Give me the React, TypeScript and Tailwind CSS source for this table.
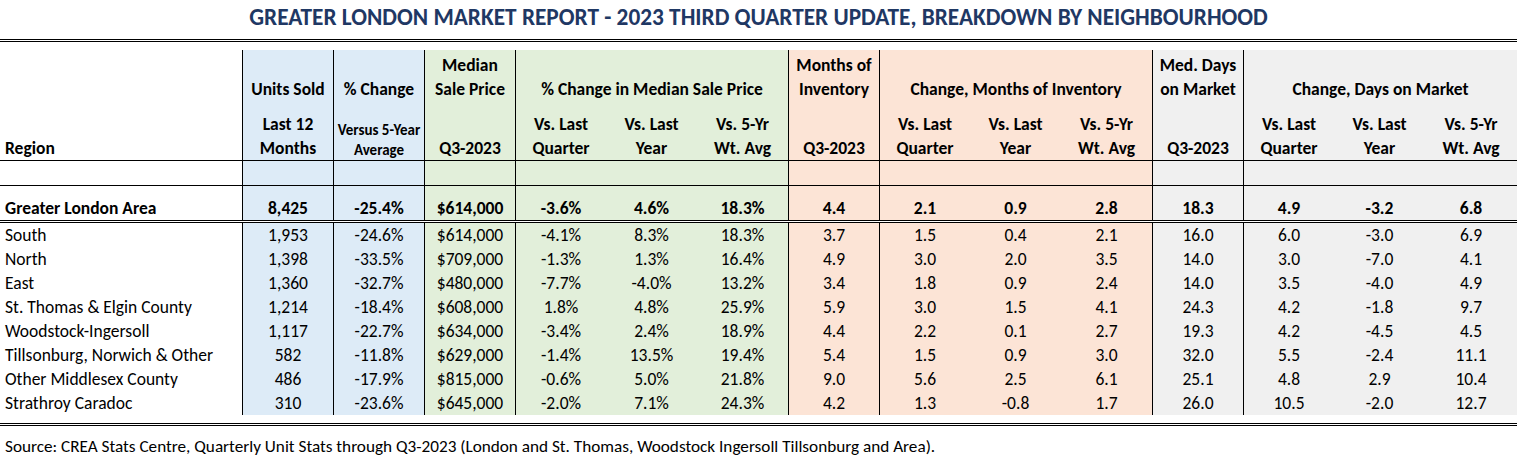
import React from "react";

const BG = [
  "bg-[#ddebf7]",
  "bg-[#ddebf7]",
  "bg-[#e2efda]",
  "bg-[#e2efda]",
  "bg-[#e2efda]",
  "bg-[#e2efda]",
  "bg-[#fce4d6]",
  "bg-[#fce4d6]",
  "bg-[#fce4d6]",
  "bg-[#fce4d6]",
  "bg-[#f0f0f0]",
  "bg-[#f0f0f0]",
  "bg-[#f0f0f0]",
  "bg-[#f0f0f0]",
];
const BL = [true, true, true, true, false, false, true, true, false, false, true, true, false, false];

const rows: [string, ...string[]][] = [
  ["South", "1,953", "-24.6%", "$614,000", "-4.1%", "8.3%", "18.3%", "3.7", "1.5", "0.4", "2.1", "16.0", "6.0", "-3.0", "6.9"],
  ["North", "1,398", "-33.5%", "$709,000", "-1.3%", "1.3%", "16.4%", "4.9", "3.0", "2.0", "3.5", "14.0", "3.0", "-7.0", "4.1"],
  ["East", "1,360", "-32.7%", "$480,000", "-7.7%", "-4.0%", "13.2%", "3.4", "1.8", "0.9", "2.4", "14.0", "3.5", "-4.0", "4.9"],
  ["St. Thomas & Elgin County", "1,214", "-18.4%", "$608,000", "1.8%", "4.8%", "25.9%", "5.9", "3.0", "1.5", "4.1", "24.3", "4.2", "-1.8", "9.7"],
  ["Woodstock-Ingersoll", "1,117", "-22.7%", "$634,000", "-3.4%", "2.4%", "18.9%", "4.4", "2.2", "0.1", "2.7", "19.3", "4.2", "-4.5", "4.5"],
  ["Tillsonburg, Norwich & Other", "582", "-11.8%", "$629,000", "-1.4%", "13.5%", "19.4%", "5.4", "1.5", "0.9", "3.0", "32.0", "5.5", "-2.4", "11.1"],
  ["Other Middlesex County", "486", "-17.9%", "$815,000", "-0.6%", "5.0%", "21.8%", "9.0", "5.6", "2.5", "6.1", "25.1", "4.8", "2.9", "10.4"],
  ["Strathroy Caradoc", "310", "-23.6%", "$645,000", "-2.0%", "7.1%", "24.3%", "4.2", "1.3", "-0.8", "1.7", "26.0", "10.5", "-2.0", "12.7"],
];

const total = ["Greater London Area", "8,425", "-25.4%", "$614,000", "-3.6%", "4.6%", "18.3%", "4.4", "2.1", "0.9", "2.8", "18.3", "4.9", "-3.2", "6.8"];

const GRID = "grid grid-cols-[242px_repeat(13,91px)_1fr]";

function cellCls(i: number) {
  return `${BG[i]} ${BL[i] ? "border-l border-black" : ""}`;
}

function H({ i, span, children, className = "" }: { i: number; span?: boolean; children: React.ReactNode; className?: string }) {
  return (
    <div className={`${cellCls(i)} ${span ? "col-span-3" : ""} flex items-end justify-center text-center whitespace-nowrap ${className}`}>
      <div>{children}</div>
    </div>
  );
}

function SubGroup({ start }: { start: number }) {
  return (
    <>
      <H i={start}>
        Vs. Last
        <br />
        Quarter
      </H>
      <H i={start + 1}>
        Vs. Last
        <br />
        Year
      </H>
      <H i={start + 2}>
        Vs. 5-Yr
        <br />
        Wt. Avg
      </H>
    </>
  );
}

export default function App() {
  return (
    <div className="w-[1517px] h-[459px] overflow-hidden bg-white text-black font-['Calibri','Carlito','Lato',sans-serif] text-[17.5px] leading-[24px]">
      <h1 className="h-[39px] flex items-center justify-center pb-[5px] text-[23.3px] font-bold text-[#1f3864]">
        GREATER LONDON MARKET REPORT - 2023 THIRD QUARTER UPDATE, BREAKDOWN BY NEIGHBOURHOOD
      </h1>
      <div className="border-t-[3px] border-double border-black" />

      {/* header */}
      <div className={`${GRID} grid-rows-[51px_59px] mt-[8px] border-b border-black font-bold`}>
        <div className="row-span-2 flex items-end pl-[5px]">Region</div>
        <H i={0}>Units Sold</H>
        <H i={1}>% Change</H>
        <H i={2}>
          Median
          <br />
          Sale Price
        </H>
        <H i={3} span>
          % Change in Median Sale Price
        </H>
        <H i={6}>
          Months of
          <br />
          Inventory
        </H>
        <H i={7} span>
          Change, Months of Inventory
        </H>
        <H i={10}>
          Med. Days
          <br />
          on Market
        </H>
        <H i={11} span>
          Change, Days on Market
        </H>

        <H i={0}>
          Last 12
          <br />
          Months
        </H>
        <H i={1} className="text-[15px] leading-[20px]">
          Versus 5-Year
          <br />
          Average
        </H>
        <H i={2}>Q3-2023</H>
        <SubGroup start={3} />
        <H i={6}>Q3-2023</H>
        <SubGroup start={7} />
        <H i={10}>Q3-2023</H>
        <SubGroup start={11} />
      </div>

      {/* spacer row */}
      <div className={`${GRID} h-[25px] border-b border-black`}>
        <div />
        {BG.map((_, i) => (
          <div key={i} className={cellCls(i)} />
        ))}
      </div>

      {/* total row */}
      <div className={`${GRID} h-[37px] border-b-[3px] border-double border-black font-bold`}>
        <div className="flex items-end pl-[5px]">{total[0]}</div>
        {total.slice(1).map((v, i) => (
          <div key={i} className={`${cellCls(i)} flex items-end justify-center`}>
            {v}
          </div>
        ))}
      </div>

      {/* data rows */}
      {rows.map((r) => (
        <div key={r[0]} className={`${GRID} h-[24px]`}>
          <div className="pl-[5px] whitespace-nowrap">{r[0]}</div>
          {r.slice(1).map((v, i) => (
            <div key={i} className={`${cellCls(i)} text-center`}>
              {v}
            </div>
          ))}
        </div>
      ))}

      <div className="mt-[8px] border-t-[3px] border-double border-black" />
      <p className="pt-[9px] pl-[5px] whitespace-nowrap text-[17.2px]">
        Source: CREA Stats Centre, Quarterly Unit Stats through Q3-2023 (London and St. Thomas, Woodstock Ingersoll Tillsonburg and Area).
      </p>
    </div>
  );
}
